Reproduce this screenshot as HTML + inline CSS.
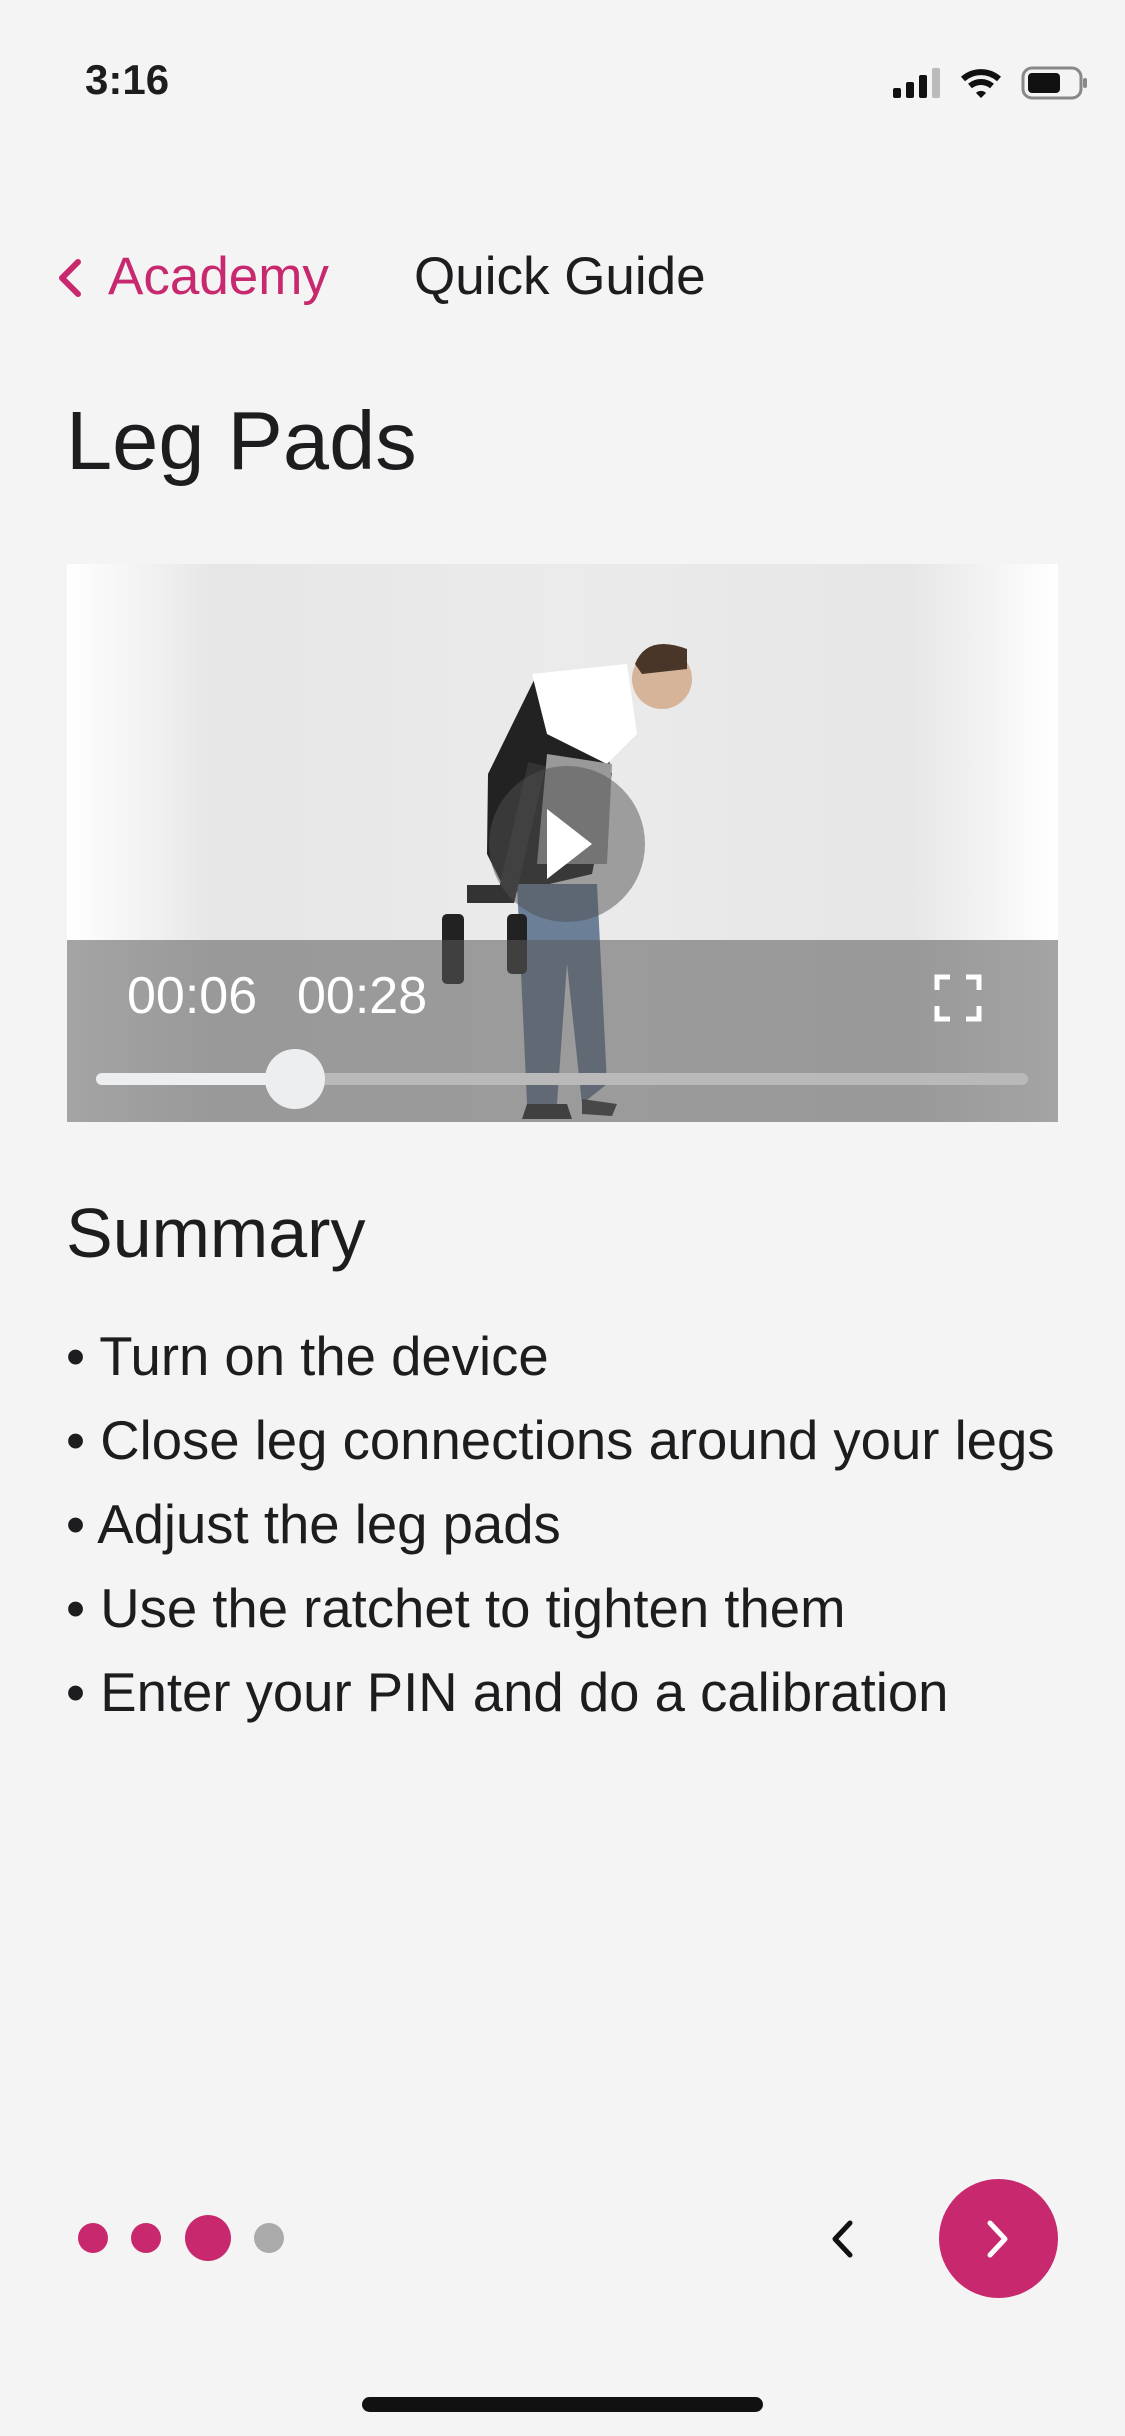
<!DOCTYPE html>
<html><head><meta charset="utf-8"><style>
*{margin:0;padding:0;box-sizing:border-box}
body{width:1125px;height:2436px;background:#f4f4f4;position:relative;overflow:hidden;font-family:"Liberation Sans",sans-serif;color:#1d1d1f}
.a{position:absolute}
</style></head><body>
<div class="a" style="left:85px;top:56px;font-size:42px;font-weight:bold">3:16</div>
<svg class="a" style="left:890px;top:64px" width="200" height="40" viewBox="0 0 200 40">
<rect x="3" y="24" width="8" height="10" rx="2" fill="#111"/><rect x="16" y="18" width="8" height="16" rx="2" fill="#111"/><rect x="29" y="11" width="8" height="23" rx="2" fill="#111"/><rect x="42" y="4" width="8" height="30" rx="2" fill="#bbb"/>
<path d="M73 15 A27 27 0 0 1 109 15" stroke="#111" stroke-width="6" fill="none"/><path d="M80 22 A17 17 0 0 1 102 22" stroke="#111" stroke-width="6" fill="none"/><path d="M86 29 L91 34 L96 29 A7 7 0 0 0 86 29Z" fill="#111"/>
<rect x="133" y="4" width="58" height="30" rx="9" stroke="#888" stroke-width="3" fill="none"/><rect x="138" y="9" width="32" height="20" rx="4" fill="#111"/><rect x="193" y="14" width="4" height="10" rx="2" fill="#888"/>
</svg>
<svg class="a" style="left:50px;top:256px" width="40" height="44"><path d="M28 6 L12 22 L28 38" stroke="#c8296e" stroke-width="6" fill="none" stroke-linecap="round" stroke-linejoin="round"/></svg>
<div class="a" style="left:108px;top:246px;font-size:53px;color:#c8296e">Academy</div>
<div class="a" style="left:414px;top:246px;font-size:53px">Quick Guide</div>
<div class="a" style="left:66px;top:393px;font-size:83px">Leg Pads</div>

<div class="a" style="left:67px;top:564px;width:991px;height:558px;overflow:hidden;background:linear-gradient(90deg,#fff 0%,#e6e6e6 15%,#ebebeb 50%,#e6e6e6 85%,#fff 100%)">
<svg class="a" style="left:0;top:0" width="991" height="558">
<path d="M421 210 L470 110 L500 110 L530 140 L545 210 L525 310 L440 330 L420 290Z" fill="#222"/>
<path d="M465 110 L560 100 L570 170 L540 200 L480 170Z" fill="#fff"/>
<circle cx="595" cy="115" r="30" fill="#d5b49a"/><path d="M568 100 Q580 70 620 85 L620 105 L575 110Z" fill="#4a3628"/>
<path d="M480 190 L545 200 L540 300 L470 300Z" fill="#999"/>
<path d="M450 320 L530 320 L540 520 L515 540 L500 400 L490 540 L460 540 Z" fill="#6b7f96"/>
<rect x="375" y="350" width="22" height="70" rx="5" fill="#222"/><rect x="440" y="350" width="20" height="60" rx="5" fill="#222"/>
<path d="M470 200 L440 330 L400 330" stroke="#333" stroke-width="18" fill="none"/>
<path d="M460 540 L500 540 L505 555 L455 555Z" fill="#222"/><path d="M515 535 L550 540 L545 552 L515 550Z" fill="#333"/>
<circle cx="500" cy="280" r="78" fill="rgba(80,80,80,0.5)"/><path d="M480 245 L480 315 L525 280Z" fill="#fff"/>
</svg>
<div class="a" style="left:0;top:376px;width:991px;height:182px;background:rgba(90,90,90,0.55)"></div>
<div class="a" style="left:60px;top:402px;font-size:52px;color:#fff">00:06</div>
<div class="a" style="left:230px;top:402px;font-size:52px;color:#fff">00:28</div>
<svg class="a" style="left:867px;top:410px" width="48" height="48"><path d="M3 16V3H16M32 3H45V16M45 32V45H32M16 45H3V32" stroke="#fff" stroke-width="5" fill="none"/></svg>
<div class="a" style="left:29px;top:509px;width:932px;height:12px;border-radius:6px;background:#b9b9b9"></div>
<div class="a" style="left:29px;top:509px;width:200px;height:12px;border-radius:6px;background:#eceeef"></div>
<div class="a" style="left:198px;top:485px;width:60px;height:60px;border-radius:50%;background:#eceeef"></div>
</div>

<div class="a" style="left:66px;top:1193px;font-size:70px">Summary</div>
<div class="a" style="left:66px;top:1315px;font-size:54.5px;line-height:84px;white-space:nowrap">
• Turn on the device<br>• Close leg connections around your legs<br>• Adjust the leg pads<br>• Use the ratchet to tighten them<br>• Enter your PIN and do a calibration</div>

<div class="a" style="left:78px;top:2223px;width:30px;height:30px;border-radius:50%;background:#c8296e"></div>
<div class="a" style="left:131px;top:2223px;width:30px;height:30px;border-radius:50%;background:#c8296e"></div>
<div class="a" style="left:185px;top:2215px;width:46px;height:46px;border-radius:50%;background:#c8296e"></div>
<div class="a" style="left:254px;top:2223px;width:30px;height:30px;border-radius:50%;background:#aaa"></div>
<svg class="a" style="left:826px;top:2218px" width="34" height="42"><path d="M24 5 L9 21 L24 37" stroke="#111" stroke-width="5" fill="none" stroke-linecap="round" stroke-linejoin="round"/></svg>
<div class="a" style="left:939px;top:2179px;width:119px;height:119px;border-radius:50%;background:#c8296e"></div>
<svg class="a" style="left:980px;top:2218px" width="34" height="42"><path d="M10 5 L25 21 L10 37" stroke="#fff" stroke-width="5" fill="none" stroke-linecap="round" stroke-linejoin="round"/></svg>
<div class="a" style="left:362px;top:2397px;width:401px;height:15px;border-radius:8px;background:#111"></div>
</body></html>
